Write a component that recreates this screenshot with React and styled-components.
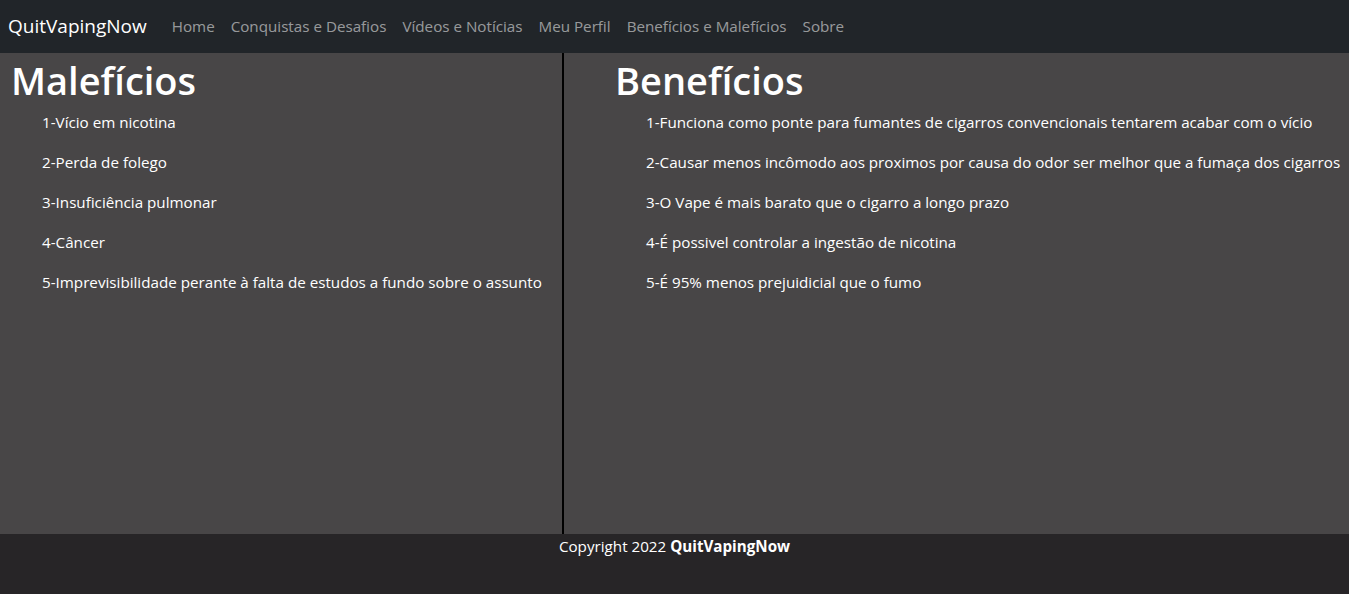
import React from 'react'
import styled, { createGlobalStyle } from 'styled-components'

const Global = createGlobalStyle`
  body {
    margin: 0;
    font-family: "Open Sans", "Noto Sans", sans-serif;
    background: #272527;
    color: #fff;
  }
`

const Navbar = styled.nav`
  background: #212529;
  height: 53px;
  display: flex;
  align-items: center;
  padding: 0 8px 2px;
  box-sizing: border-box;
  .brand {
    font-size: 19px;
    color: #fff;
    margin-right: 17px;
  }
  .links {
    display: flex;
  }
`

const NavLink = styled.a`
  color: rgba(255, 255, 255, 0.55);
  font-size: 15.2px;
  padding: 0 8px;
  text-decoration: none;
`

const Main = styled.main`
  display: grid;
  grid-template-columns: 562px 2px 1fr;
  height: 481px;
  background: #484647;
`

const Divider = styled.div`
  background: #000;
`

const Column = styled.section`
  padding: 1px 0 0 ${p => p.$indent}px;
  h1 {
    margin: 0 0 4px;
    font-size: 38px;
    font-weight: 600;
  }
  ul {
    list-style: none;
    margin: 0;
    padding: 0 0 0 31px;
  }
  li {
    font-size: 15.2px;
    line-height: 24px;
    margin-bottom: 16px;
  }
`

const Footer = styled.footer`
  height: 60px;
  background: #272527;
  text-align: center;
  font-size: 15.2px;
  padding-top: 2px;
  box-sizing: border-box;
  b { font-weight: 700; }
`

const links = ['Home', 'Conquistas e Desafios', 'Vídeos e Notícias', 'Meu Perfil', 'Benefícios e Malefícios', 'Sobre']

const maleficios = [
  '1-Vício em nicotina',
  '2-Perda de folego',
  '3-Insuficiência pulmonar',
  '4-Câncer',
  '5-Imprevisibilidade perante à falta de estudos a fundo sobre o assunto',
]

const beneficios = [
  '1-Funciona como ponte para fumantes de cigarros convencionais tentarem acabar com o vício',
  '2-Causar menos incômodo aos proximos por causa do odor ser melhor que a fumaça dos cigarros',
  '3-O Vape é mais barato que o cigarro a longo prazo',
  '4-É possivel controlar a ingestão de nicotina',
  '5-É 95% menos prejuidicial que o fumo',
]

export default function App() {
  return (
    <>
      <Global />
      <Navbar>
        <span className="brand">QuitVapingNow</span>
        <div className="links">
          {links.map(l => <NavLink key={l} href="#">{l}</NavLink>)}
        </div>
      </Navbar>
      <Main>
        <Column $indent={11}>
          <h1>Malefícios</h1>
          <ul>{maleficios.map(m => <li key={m}>{m}</li>)}</ul>
        </Column>
        <Divider />
        <Column $indent={51}>
          <h1>Benefícios</h1>
          <ul>{beneficios.map(b => <li key={b}>{b}</li>)}</ul>
        </Column>
      </Main>
      <Footer>
        Copyright 2022 <b>QuitVapingNow</b>
      </Footer>
    </>
  )
}
